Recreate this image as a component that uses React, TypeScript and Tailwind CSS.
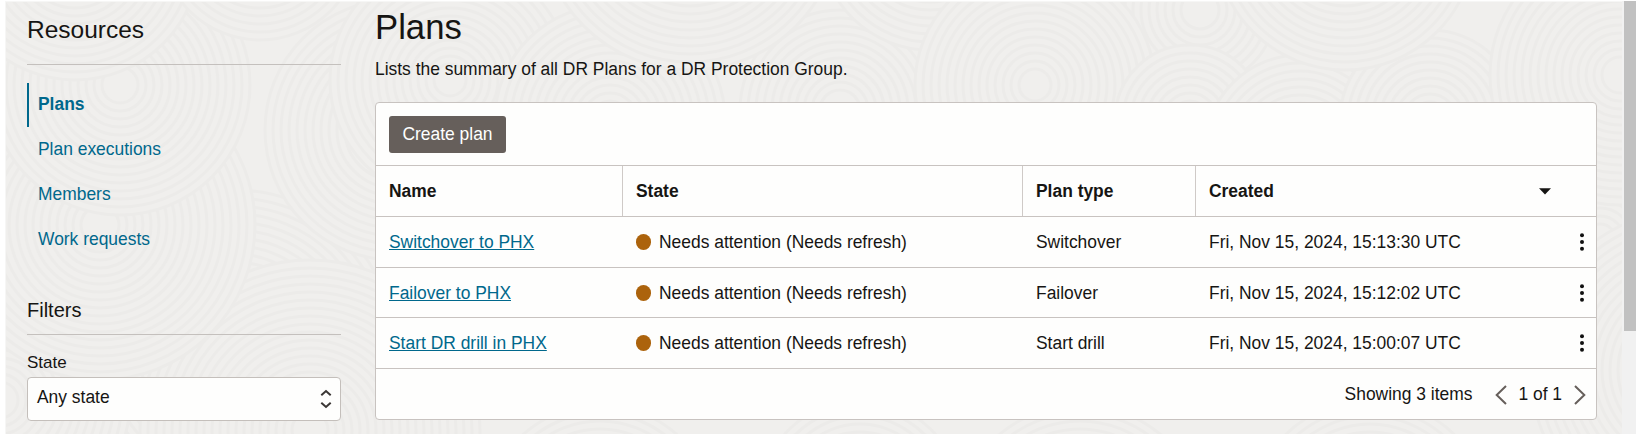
import React from "react";

type Plan = { name: string; type: string; created: string };

const plans: Plan[] = [
  { name: "Switchover to PHX", type: "Switchover", created: "Fri, Nov 15, 2024, 15:13:30 UTC" },
  { name: "Failover to PHX", type: "Failover", created: "Fri, Nov 15, 2024, 15:12:02 UTC" },
  { name: "Start DR drill in PHX", type: "Start drill", created: "Fri, Nov 15, 2024, 15:00:07 UTC" },
];

const resources = ["Plan executions", "Members", "Work requests"];

// Overlapping discs of concentric rings: centre x, centre y, radius.
const discs: [number, number, number][] = [
  [235, 350, 160],
  [0, 400, 130],
  [310, 430, 170],
  [395, 130, 130],
  [100, 225, 155],
  [120, 85, 130],
  [75, -45, 125],
  [260, -60, 100],
  [450, 80, 120],
  [610, 120, 115],
  [840, 110, 100],
  [690, -80, 150],
  [930, -60, 110],
  [1200, 10, 75],
  [1035, 85, 120],
  [1190, 120, 75],
  [1300, 150, 95],
  [1430, 120, 90],
  [1345, -60, 130],
  [1600, 240, 120],
  [1620, 75, 130],
  [1690, 370, 160],
  [600, 520, 115],
  [860, 500, 100],
  [1080, 530, 125],
  [1370, 520, 120],
];

function Backdrop() {
  return (
    <svg className="absolute inset-0 h-full w-full" viewBox="6 2 1616 432" preserveAspectRatio="none" aria-hidden="true">
      {discs.map(([x, y, r], i) => (
        <g key={i}>
          <circle cx={x} cy={y} r={r} fill="#f0efed" />
          {Array.from({ length: Math.floor(r / 8) - 1 }, (_, n) => (
            <circle key={n} cx={x} cy={y} r={r - n * 8} fill="none" stroke="#ecebe9" strokeWidth="3" />
          ))}
        </g>
      ))}
    </svg>
  );
}

function Kebab() {
  return (
    <svg width="6" height="20" viewBox="0 0 6 20" fill="#111">
      <circle cx="3" cy="3.3" r="2" />
      <circle cx="3" cy="10" r="2" />
      <circle cx="3" cy="16.7" r="2" />
    </svg>
  );
}

const cols = "grid grid-cols-[247px_400px_173px_minmax(0,1fr)]";

export default function App() {
  return (
    <div className="flex h-[435px] w-[1640px] overflow-hidden bg-white pt-px pb-px pl-[5px] font-['Liberation_Sans',Arial,sans-serif] text-[17.43px] leading-[20px] text-[#161513]">
      <div className="relative flex w-[1617px] border-t border-l border-[#f6f6f5] bg-[#f0efed]">
        <Backdrop />
        <aside className="relative ml-[21px] w-[314px] shrink-0">
          <h2 className="flex h-[63px] items-start border-b border-[#c4c0bd] pt-[14px] text-[24.5px] leading-[28px]">Resources</h2>
          <nav className="mt-[18px] text-[#00688c]">
            <a className="flex h-[44px] items-center border-l-2 border-[#00688c] pb-[2px] pl-[9px] font-bold">Plans</a>
            {resources.map((r) => (
              <a key={r} className="flex h-[45px] items-center pb-[2px] pl-[11px]">{r}</a>
            ))}
          </nav>
          <h3 className="mt-[36px] flex h-[37px] items-start border-b border-[#c4c0bd] text-[20px] leading-[24px]">Filters</h3>
          <div className="mt-[18px] text-[17px]">State</div>
          <div className="mt-[4px] flex h-[44px] items-center justify-between rounded-[4px] border border-[#c4bfbb] bg-[#fefefd] pr-[8px] pl-[9px]">
            <span className="-mt-[4px]">Any state</span>
            <svg className="-mt-px" width="12" height="20" viewBox="0 0 12 20" fill="none" stroke="#3a3634" strokeWidth="2">
              <path d="M1.3 6.3 6 2l4.700 4.300M1.300 13.700 6 18l4.700-4.300" />
            </svg>
          </div>
        </aside>
        <main className="relative ml-[34px] w-[1222px] shrink-0">
          <h1 className="mt-[5px] text-[34.7px] leading-[40px]">Plans</h1>
          <p className="mt-[12px] leading-[20px]">Lists the summary of all DR Plans for a DR Protection Group.</p>
          <section className="mt-[23px] h-[318px] rounded-[4px] border border-[#c8c3c0] bg-[#fefefd]">
            <div className="flex h-[63px] items-center border-b border-[#c8c3c0] pl-[13px]">
              <button className="h-[37px] w-[117px] rounded-[3px] bg-[#665f5b] pb-[1px] text-white">Create plan</button>
            </div>
            <div className={cols + " h-[51px] border-b border-[#c8c3c0] font-bold"}>
              <div className="flex items-center border-r border-[#cfcac7] pl-[13px]">Name</div>
              <div className="flex items-center border-r border-[#cfcac7] pl-[13px]">State</div>
              <div className="flex items-center border-r border-[#cfcac7] pl-[13px]">Plan type</div>
              <div className="flex items-center justify-between pr-[45px] pl-[13px]">
                Created
                <svg width="12" height="7" viewBox="0 0 12 7" fill="#161513"><path d="M0 .3h12L6 6.500z" /></svg>
              </div>
            </div>
            {plans.map((p, i) => (
              <div key={p.name} className={cols + (i === 1 ? " h-[50px]" : " h-[51px]") + " border-b border-[#c8c3c0]"}>
                <div className="flex items-center pl-[13px] text-[#00688c]">
                  <a className="underline decoration-1 underline-offset-1">{p.name}</a>
                </div>
                <div className="flex items-center gap-[8px] pl-[13px]">
                  <i className="h-[16px] w-[15px] rounded-full bg-[#ac630c]" />
                  Needs attention (Needs refresh)
                </div>
                <div className="flex items-center pl-[13px]">{p.type}</div>
                <div className="flex items-center justify-between pr-[11px] pl-[13px]">
                  {p.created}
                  <Kebab />
                </div>
              </div>
            ))}
            <div className="flex h-[50px] items-center justify-end pr-[10px]">
              <span>Showing 3 items</span>
              <svg className="mt-[2px] ml-[23px]" width="12" height="20" viewBox="0 0 12 20" fill="none" stroke="#665f5b" strokeWidth="2"><path d="M11 1 1.700 10 11 19" /></svg>
              <span className="mr-[12px] ml-[11px]">1 of 1</span>
              <svg className="mt-[2px]" width="12" height="20" viewBox="0 0 12 20" fill="none" stroke="#665f5b" strokeWidth="2"><path d="M1 1 10.300 10 1 19" /></svg>
            </div>
          </section>
        </main>
      </div>
      <div className="w-[14px] bg-[#f1f1f1] pl-[2px]">
        <div className="h-[330px] bg-[#c1c1c1]" />
      </div>
    </div>
  );
}
